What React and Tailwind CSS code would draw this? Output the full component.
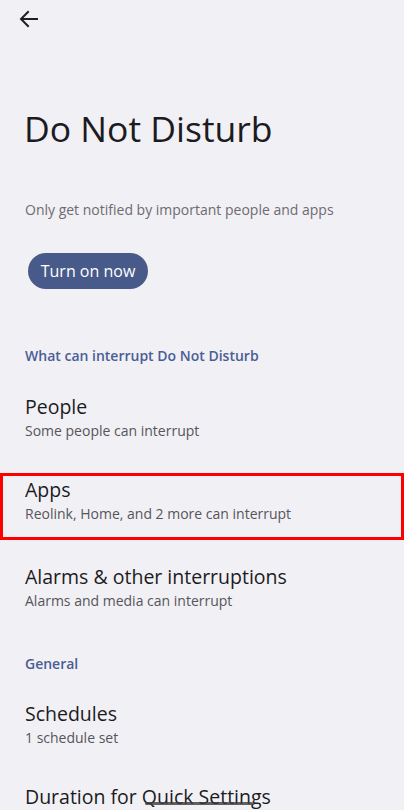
import React from "react";

const font = { fontFamily: '"Open Sans", Roboto, sans-serif' };

function BackArrow() {
  return (
    <svg width="24" height="24" viewBox="0 0 24 24" fill="none" stroke="#1f1f1f" strokeWidth="2" strokeLinecap="square">
      <path d="M20 12H5" />
      <path d="M11 5l-7 7 7 7" />
    </svg>
  );
}

function Row({ title, summary, highlighted }) {
  return (
    <div
      className={
        highlighted
          ? "border-[3px] border-[#ff0000] px-[22px] pb-[13px]"
          : "px-[25px]"
      }
    >
      <div className="text-[19.5px] leading-[28px] text-[#1c1b1f]">{title}</div>
      <div className="text-[14px] leading-[20px] text-[#56555b]">{summary}</div>
    </div>
  );
}

function SectionHeader({ children }) {
  return (
    <div className="px-[25px] text-[14px] font-semibold leading-[20px] text-[#4a5d96]">{children}</div>
  );
}

export default function App() {
  return (
    <div className="relative h-[810px] w-[404px] overflow-hidden bg-[#f1f0f4]" style={font}>
      <div className="pl-[17px] pt-[7px]">
        <BackArrow />
      </div>

      <h1 className="mt-[73px] px-[24px] text-[35.5px] leading-[48px] text-[#1c1b1f]">Do Not Disturb</h1>

      <p className="mt-[48px] px-[25px] text-[14px] leading-[20px] text-[#6d6b72]">
        Only get notified by important people and apps
      </p>

      <div className="mt-[33px] px-[28px]">
        <button className="h-[36px] w-[120px] rounded-full bg-[#485a8a] text-[16px] text-white">
          Turn on now
        </button>
      </div>

      <div className="mt-[57px]">
        <SectionHeader>What can interrupt Do Not Disturb</SectionHeader>
      </div>

      <div className="mt-[27px]">
        <Row title="People" summary="Some people can interrupt" />
      </div>
      <div className="mt-[32px]">
        <Row title="Apps" summary="Reolink, Home, and 2 more can interrupt" highlighted />
      </div>
      <div className="mt-[23px]">
        <Row title="Alarms & other interruptions" summary="Alarms and media can interrupt" />
      </div>

      <div className="mt-[43px]">
        <SectionHeader>General</SectionHeader>
      </div>

      <div className="mt-[26px]">
        <Row title="Schedules" summary="1 schedule set" />
      </div>
      <div className="mt-[35px]">
        <Row title="Duration for Quick Settings" summary="Until you turn off" />
      </div>

      {/* gesture navigation handle */}
      <div className="absolute bottom-[5px] left-[145px] h-[3px] w-[108px] rounded-full bg-[#3c3c3c]/80" />
    </div>
  );
}
